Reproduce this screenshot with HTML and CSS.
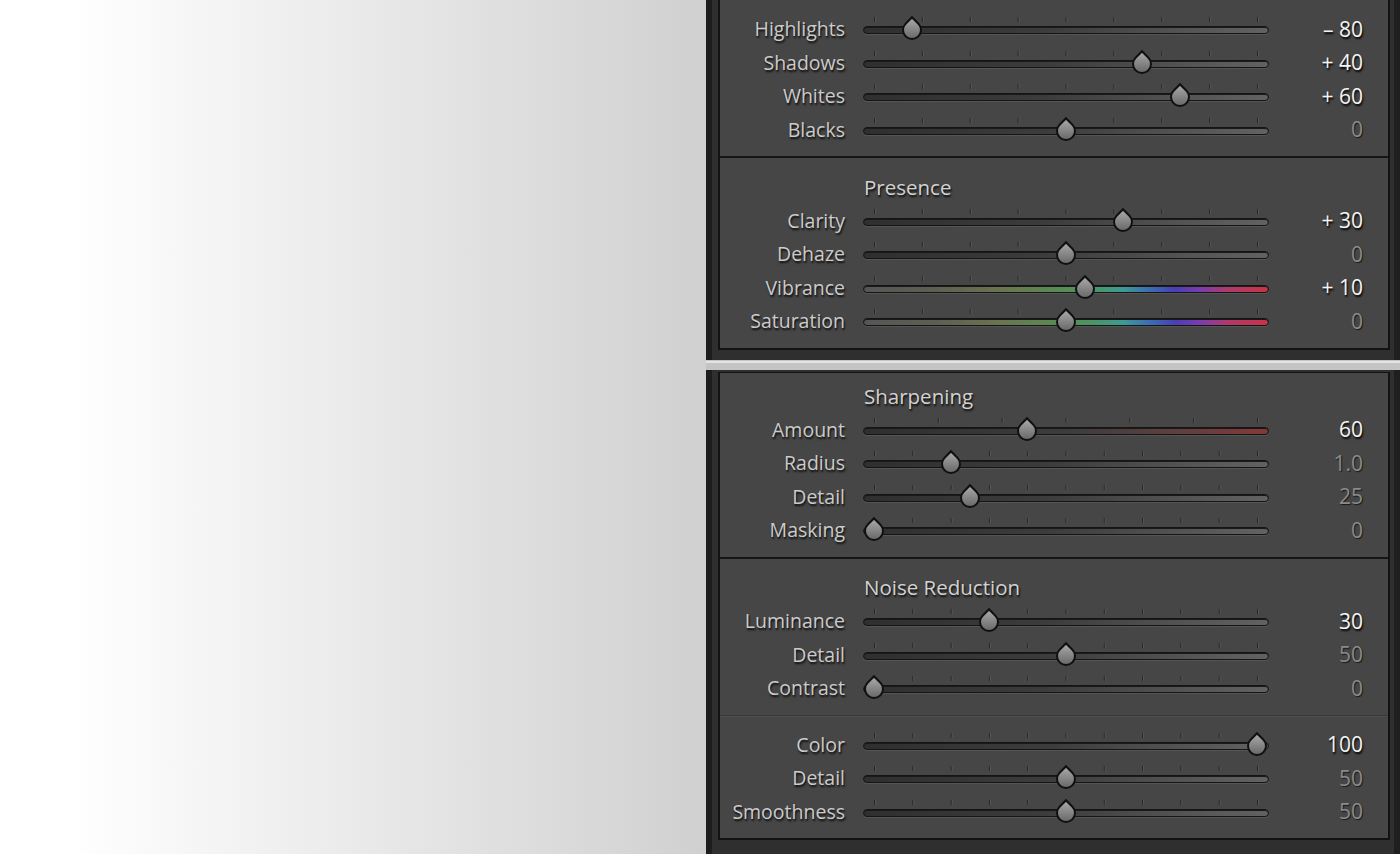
FILE: index.html
```html
<!DOCTYPE html>
<html lang="en">
<head>
    <meta charset="UTF-8">
    <meta name="viewport" content="width=device-width, initial-scale=1.0">
    <title>Develop Panel</title>
    <link rel="stylesheet" href="styles.css">
</head>
<body>
    <div class="backdrop"></div>
    <div class="column">
        <div class="frame first">
            <div class="panel no-top">
                <div class="section">
                    <div class="row">
                        <span class="label">Highlights</span>
                        <div class="track"><div class="ticks t9"></div><span class="thumb" style="--v:0.1"></span></div>
                        <span class="value on">&ndash; 80</span>
                    </div>
                    <div class="row">
                        <span class="label">Shadows</span>
                        <div class="track"><div class="ticks t9"></div><span class="thumb" style="--v:0.7"></span></div>
                        <span class="value on">+ 40</span>
                    </div>
                    <div class="row">
                        <span class="label">Whites</span>
                        <div class="track"><div class="ticks t9"></div><span class="thumb" style="--v:0.8"></span></div>
                        <span class="value on">+ 60</span>
                    </div>
                    <div class="row">
                        <span class="label">Blacks</span>
                        <div class="track"><div class="ticks t9"></div><span class="thumb" style="--v:0.5"></span></div>
                        <span class="value">0</span>
                    </div>
                </div>
                <div class="section">
                    <div class="row">
                        <span class="heading">Presence</span>
                    </div>
                    <div class="row">
                        <span class="label">Clarity</span>
                        <div class="track"><div class="ticks t9"></div><span class="thumb" style="--v:0.65"></span></div>
                        <span class="value on">+ 30</span>
                    </div>
                    <div class="row">
                        <span class="label">Dehaze</span>
                        <div class="track"><div class="ticks t9"></div><span class="thumb" style="--v:0.5"></span></div>
                        <span class="value">0</span>
                    </div>
                    <div class="row">
                        <span class="label">Vibrance</span>
                        <div class="track hue"><div class="ticks t9"></div><span class="thumb" style="--v:0.55"></span></div>
                        <span class="value on">+ 10</span>
                    </div>
                    <div class="row">
                        <span class="label">Saturation</span>
                        <div class="track hue"><div class="ticks t9"></div><span class="thumb" style="--v:0.5"></span></div>
                        <span class="value">0</span>
                    </div>
                </div>
            </div>
        </div>

        <div class="frame second">
            <div class="panel">
                <div class="section cut">
                    <div class="row">
                        <span class="heading">Sharpening</span>
                    </div>
                    <div class="row">
                        <span class="label">Amount</span>
                        <div class="track red"><div class="ticks t7"></div><span class="thumb" style="--v:0.4"></span></div>
                        <span class="value on">60</span>
                    </div>
                    <div class="row">
                        <span class="label">Radius</span>
                        <div class="track"><div class="ticks t11"></div><span class="thumb" style="--v:0.2"></span></div>
                        <span class="value">1.0</span>
                    </div>
                    <div class="row">
                        <span class="label">Detail</span>
                        <div class="track"><div class="ticks t11"></div><span class="thumb" style="--v:0.25"></span></div>
                        <span class="value">25</span>
                    </div>
                    <div class="row">
                        <span class="label">Masking</span>
                        <div class="track"><div class="ticks t11"></div><span class="thumb" style="--v:0"></span></div>
                        <span class="value">0</span>
                    </div>
                </div>
                <div class="section">
                    <div class="row">
                        <span class="heading">Noise Reduction</span>
                    </div>
                    <div class="row">
                        <span class="label">Luminance</span>
                        <div class="track"><div class="ticks t11"></div><span class="thumb" style="--v:0.3"></span></div>
                        <span class="value on">30</span>
                    </div>
                    <div class="row">
                        <span class="label">Detail</span>
                        <div class="track"><div class="ticks t11"></div><span class="thumb" style="--v:0.5"></span></div>
                        <span class="value">50</span>
                    </div>
                    <div class="row">
                        <span class="label">Contrast</span>
                        <div class="track"><div class="ticks t11"></div><span class="thumb" style="--v:0"></span></div>
                        <span class="value">0</span>
                    </div>
                </div>
                <div class="section sub">
                    <div class="row">
                        <span class="label">Color</span>
                        <div class="track"><div class="ticks t11"></div><span class="thumb" style="--v:1"></span></div>
                        <span class="value on">100</span>
                    </div>
                    <div class="row">
                        <span class="label">Detail</span>
                        <div class="track"><div class="ticks t11"></div><span class="thumb" style="--v:0.5"></span></div>
                        <span class="value">50</span>
                    </div>
                    <div class="row">
                        <span class="label">Smoothness</span>
                        <div class="track"><div class="ticks t11"></div><span class="thumb" style="--v:0.5"></span></div>
                        <span class="value">50</span>
                    </div>
                </div>
            </div>
        </div>
    </div>
</body>
</html>
```

FILE: styles.css
```css
html, body {
    margin: 0;
    height: 854px;
    overflow: hidden;
}
body {
    display: flex;
    font-family: "Open Sans", "Liberation Sans", sans-serif;
    background: #ccc;
}
.backdrop {
    width: 706px;
    flex: none;
    background: linear-gradient(to right, #fff 70px, #d0d0d0 100%);
}
.column {
    flex: 1;
    display: flex;
    flex-direction: column;
    gap: 10px;
    background: linear-gradient(#c6c6c6 361px, #e4e4e4 361px 363px, #c4c4c4 363px);
}
.frame {
    background: #2f2f2f;
    border-left: 6px solid #1d1d1d;
    border-right: 6px solid #1f1f1f;
    padding: 0 4px 0 6px;
}
.frame.first {
    height: 360px;
    box-sizing: border-box;
    padding-bottom: 10px;
}
.frame.second {
    flex: 1;
    padding-top: 2px;
}
.panel {
    background: #464646;
    border: 2px solid #131313;
    border-top-width: 1px;
}
.panel.no-top {
    border-top: none;
}
.section {
    padding: 12px 0 10px;
}
.section + .section {
    border-top: 2px solid #151515;
}
.section.cut {
    padding-top: 6px;
}
.section.sub {
    border-top: 1px solid #383838;
    box-shadow: inset 0 1px 0 #4e4e4e;
}
.row {
    display: grid;
    grid-template-columns: 125px 406px 1fr;
    column-gap: 18px;
    align-items: center;
    height: 33.5px;
}
.label {
    text-align: right;
    font-size: 19.5px;
    color: #cbcbcb;
    text-shadow: 1px 2px 2px #0c0c0c;
}
.heading {
    grid-column: 2;
    padding-left: 1px;
    font-size: 20.5px;
    color: #d2d2d2;
    text-shadow: 1px 2px 2px #0c0c0c;
}
.value {
    text-align: right;
    padding-right: 25px;
    font-size: 21px;
    color: #8a8a8a;
    text-shadow: 1px 1px 1px #1a1a1a;
}
.value.on {
    color: #f4f4f4;
    text-shadow: 1px 2px 2px #000;
}
.track {
    position: relative;
    margin-top: 3px;
    border: 1px solid #151515;
    border-radius: 5px;
    box-sizing: border-box;
    height: 8px;
    background: linear-gradient(to right, #2f2f2f, #3c3c3c 45%, #626262);
    box-shadow: inset 0 1px 0 #1a1a1a, 0 1px 0 #555;
}
.track.hue {
    background: linear-gradient(to right, #565656 0%, #5e5f52 18%, #6a7350 33%, #5d8652 45%, #4c9560 56%, #3f9a95 64%, #3b6cb4 71%, #4a3fb4 77%, #7a3cb0 83%, #b03a6a 90%, #c83448 100%);
}
.track.red {
    background: linear-gradient(to right, #2f2f2f, #3c3c3c 50%, #5a4040 75%, #853838);
}
.ticks {
    position: absolute;
    top: -10px;
    left: 10px;
    width: 385px;
    height: 5px;
    background-image: linear-gradient(to right, #262626 0 1px, #565656 1px 2px, transparent 2px);
    background-repeat: repeat-x;
}
.ticks.t9 {
    background-size: 47.875px 5px;
}
.ticks.t7 {
    background-size: 63.833px 5px;
}
.ticks.t11 {
    background-size: 38.3px 5px;
}
.thumb {
    position: absolute;
    top: -7px;
    left: calc(var(--v) * 383px);
    width: 20px;
    height: 20px;
    box-sizing: border-box;
    border: 2px solid #101010;
    border-radius: 0 50% 50% 50%;
    transform: rotate(45deg);
    background: linear-gradient(to bottom right, #a8a8a8, #808080 55%, #606060);
}
```
